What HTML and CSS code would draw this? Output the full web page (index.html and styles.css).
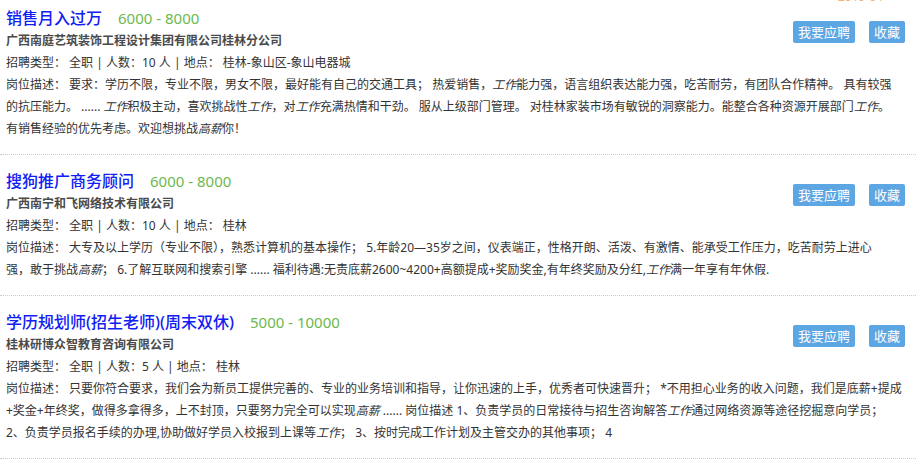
FILE: index.html
```html
<!DOCTYPE html>
<html>
<head>
    <meta charset="utf-8">
    <title>职位列表</title>
    <link rel="stylesheet" href="styles.css">
</head>
<body>
    <div class="list">
        <div class="prev-date"><span>2019-04</span></div>

        <div class="job">
            <div class="job-head">
                <div class="job-info">
                    <h3 class="job-title"><a href="#">销售月入过万</a><span class="salary">6000 - 8000</span></h3>
                    <p class="company">广西南庭艺筑装饰工程设计集团有限公司桂林分公司</p>
                    <p class="meta">招聘类型： 全职 | 人数：10 人 | 地点： 桂林-象山区-象山电器城</p>
                </div>
                <div class="job-actions">
                    <button class="btn">我要应聘</button>
                    <button class="btn">收藏</button>
                </div>
            </div>
            <p class="desc">岗位描述： 要求：学历不限，专业不限，男女不限，最好能有自己的交通工具； 热爱销售，<em>工作</em>能力强，语言组织表达能力强，吃苦耐劳，有团队合作精神。 具有较强<br>的抗压能力。 ...... <em>工作</em>积极主动，喜欢挑战性<em>工作</em>，对<em>工作</em>充满热情和干劲。 服从上级部门管理。 对桂林家装市场有敏锐的洞察能力。能整合各种资源开展部门<em>工作</em>。<br>有销售经验的优先考虑。欢迎想挑战<em>高薪</em>你！</p>
        </div>

        <div class="job">
            <div class="job-head">
                <div class="job-info">
                    <h3 class="job-title"><a href="#">搜狗推广商务顾问</a><span class="salary">6000 - 8000</span></h3>
                    <p class="company">广西南宁和飞网络技术有限公司</p>
                    <p class="meta">招聘类型： 全职 | 人数：10 人 | 地点： 桂林</p>
                </div>
                <div class="job-actions">
                    <button class="btn">我要应聘</button>
                    <button class="btn">收藏</button>
                </div>
            </div>
            <p class="desc">岗位描述： 大专及以上学历（专业不限），熟悉计算机的基本操作； 5.年龄20—35岁之间，仪表端正，性格开朗、活泼、有激情、能承受工作压力，吃苦耐劳上进心<br>强，敢于挑战<em>高薪</em>； 6.了解互联网和搜索引擎 ...... 福利待遇:无责底薪2600~4200+高额提成+奖励奖金,有年终奖励及分红,<em>工作</em>满一年享有年休假.</p>
        </div>

        <div class="job">
            <div class="job-head">
                <div class="job-info">
                    <h3 class="job-title"><a href="#">学历规划师(招生老师)(周末双休)</a><span class="salary">5000 - 10000</span></h3>
                    <p class="company">桂林研博众智教育咨询有限公司</p>
                    <p class="meta">招聘类型： 全职 | 人数：5 人 | 地点： 桂林</p>
                </div>
                <div class="job-actions">
                    <button class="btn">我要应聘</button>
                    <button class="btn">收藏</button>
                </div>
            </div>
            <p class="desc">岗位描述： 只要你符合要求，我们会为新员工提供完善的、专业的业务培训和指导，让你迅速的上手，优秀者可快速晋升； *不用担心业务的收入问题，我们是底薪+提成+奖金+年终奖，做得多拿得多，上不封顶，只要努力完全可以实现<em>高薪</em> ...... 岗位描述 1、负责学员的日常接待与招生咨询解答<em>工作</em>通过网络资源等途径挖掘意向学员； 2、负责学员报名手续的办理,协助做好学员入校报到上课等<em>工作</em>； 3、按时完成工作计划及主管交办的其他事项； 4</p>
        </div>
    </div>
</body>
</html>
```

FILE: styles.css
```css
body {
    margin: 0;
    padding: 0;
    background: #fff;
    font-family: "Noto Sans", "Noto Sans CJK SC", sans-serif;
    color: #333;
}
.list {
    width: 916px;
}
.prev-date {
    height: 3px;
    overflow: hidden;
    display: flex;
    justify-content: flex-end;
    align-items: flex-end;
    padding-right: 33px;
}
.prev-date span {
    font-size: 12px;
    line-height: 12px;
    color: #f0b27a;
}
.job {
    padding: 14px 11px 14px 6px;
    border-bottom: 1px dotted #ccc;
}
.job:nth-child(2) {
    padding-top: 3px;
}
.job-head {
    display: flex;
    justify-content: space-between;
}
.job-title {
    margin: 0;
    font-size: 16px;
    line-height: 24px;
    font-weight: 500;
}
.job-title a {
    color: #1020f5;
    text-decoration: none;
}
.salary {
    margin-left: 16px;
    font-size: 15px;
    font-weight: normal;
    color: #6cb94c;
}
.company {
    margin: 0;
    font-size: 12px;
    line-height: 22px;
    font-weight: bold;
    color: #4a4a4a;
}
.meta {
    margin: 0;
    font-size: 12px;
    line-height: 22px;
}
.job-actions {
    display: flex;
    align-items: flex-start;
    gap: 14px;
    padding-top: 15px;
}
.btn {
    height: 22px;
    padding: 0 5px;
    border: none;
    border-radius: 2px;
    background: #5ca6e3;
    color: #fff;
    font-family: "Noto Sans CJK SC", sans-serif;
    font-size: 13px;
    line-height: 22px;
}
.desc {
    margin: 0;
    font-size: 12px;
    line-height: 22px;
}
.desc em {
    font-style: italic;
}
```
